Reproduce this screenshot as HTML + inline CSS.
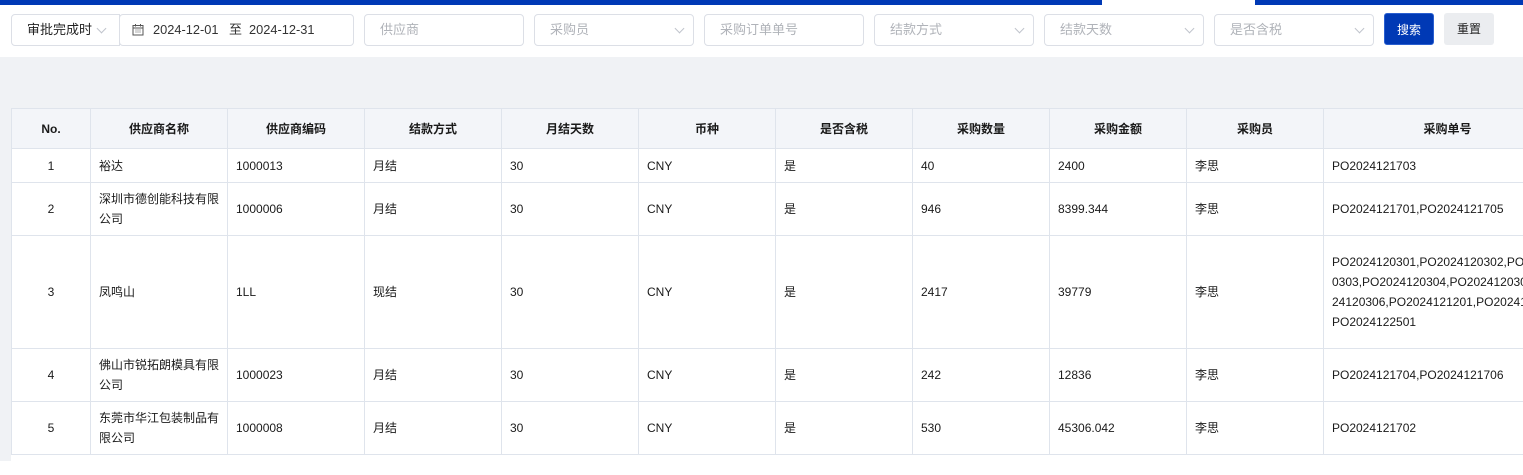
<!DOCTYPE html>
<html><head><meta charset="utf-8">
<style>
*{box-sizing:border-box;margin:0;padding:0}
html,body{width:1523px;height:461px;overflow:hidden;background:#fff;font-family:"Liberation Sans","Noto Sans CJK SC",sans-serif;font-size:12px;color:#222}
.topbar{position:absolute;left:0;top:0;width:1523px;height:5px;background:#0039b5}
.gap{position:absolute;left:1102px;top:0;width:153px;height:5px;background:#fff}
.bg{position:absolute;left:0;top:57px;width:1523px;height:404px;background:#f0f2f5}
.box{position:absolute;top:14px;height:32px;border:1px solid #dcdfe6;border-radius:4px;background:#fff;color:#b0b3b9;font-size:13px;line-height:30px;padding-left:15px}
.chev{position:absolute;right:10px;top:10px;width:7px;height:7px;border-right:1px solid #c0c4cc;border-bottom:1px solid #c0c4cc;transform:rotate(45deg)}
.btn{position:absolute;top:13px;height:32px;border-radius:3px;font-size:12px;line-height:32px;text-align:center}
table{position:absolute;left:11px;top:108px;border-collapse:collapse;table-layout:fixed;width:1560px;background:#fff}
td,th{border:1px solid #dfe4ec;padding:0 8px;vertical-align:middle;font-size:12px;line-height:20px;white-space:nowrap;overflow:hidden;color:#1a1a1a}
th{background:#f3f5f9;height:40px;font-weight:bold;color:#1a1a1a;text-align:center}
td:first-child{text-align:center}
</style></head><body>
<div class="topbar"></div><div class="gap"></div>
<div class="bg"></div>
<div class="box" style="left:11px;width:109px;color:#222;border-radius:4px 0 0 4px">审批完成时<span class="chev" style="right:14px"></span></div>
<div class="box" style="left:119px;width:235px;color:#333;padding-left:12px">
<svg width="12" height="12" viewBox="0 0 12 12" style="position:absolute;left:12px;top:9px"><rect x="1" y="1.5" width="10" height="9.5" fill="none" stroke="#555" stroke-width="1"/><line x1="1" y1="4" x2="11" y2="4" stroke="#555"/><line x1="3.5" y1="0" x2="3.5" y2="2.5" stroke="#555"/><line x1="8.5" y1="0" x2="8.5" y2="2.5" stroke="#555"/><line x1="3" y1="6" x2="9" y2="6" stroke="#999" stroke-width=".8"/><line x1="3" y1="8" x2="9" y2="8" stroke="#999" stroke-width=".8"/></svg>
<span style="position:absolute;left:33px;font-size:12.8px">2024-12-01</span>
<span style="position:absolute;left:109px;font-size:13px">至</span>
<span style="position:absolute;left:129px;font-size:12.8px">2024-12-31</span></div>
<div class="box" style="left:364px;width:160px">供应商</div>
<div class="box" style="left:534px;width:160px">采购员<span class="chev"></span></div>
<div class="box" style="left:704px;width:160px">采购订单单号</div>
<div class="box" style="left:874px;width:160px">结款方式<span class="chev"></span></div>
<div class="box" style="left:1044px;width:160px">结款天数<span class="chev"></span></div>
<div class="box" style="left:1214px;width:160px">是否含税<span class="chev"></span></div>
<div class="btn" style="left:1384px;width:50px;background:#0039b5;color:#fff;border:1px solid #2a5fd0">搜索</div>
<div class="btn" style="left:1444px;width:50px;background:#ebedf0;color:#222">重置</div>
<table>
<colgroup><col style="width:79px"><col style="width:137px"><col style="width:137px"><col style="width:137px"><col style="width:137px"><col style="width:137px"><col style="width:137px"><col style="width:137px"><col style="width:137px"><col style="width:137px"><col style="width:248px"></colgroup>
<tr><th>No.</th><th>供应商名称</th><th>供应商编码</th><th>结款方式</th><th>月结天数</th><th>币种</th><th>是否含税</th><th>采购数量</th><th>采购金额</th><th>采购员</th><th>采购单号</th></tr>
<tr style="height:34px"><td>1</td><td>裕达</td><td>1000013</td><td>月结</td><td>30</td><td>CNY</td><td>是</td><td>40</td><td>2400</td><td>李思</td><td>PO2024121703</td></tr>
<tr style="height:53px"><td>2</td><td>深圳市德创能科技有限<br>公司</td><td>1000006</td><td>月结</td><td>30</td><td>CNY</td><td>是</td><td>946</td><td>8399.344</td><td>李思</td><td>PO2024121701,PO2024121705</td></tr>
<tr style="height:113px"><td>3</td><td>凤鸣山</td><td>1LL</td><td>现结</td><td>30</td><td>CNY</td><td>是</td><td>2417</td><td>39779</td><td>李思</td><td>PO2024120301,PO2024120302,PO2024120<br>0303,PO2024120304,PO2024120305,PO20<br>24120306,PO2024121201,PO2024121202,<br>PO2024122501</td></tr>
<tr style="height:53px"><td>4</td><td>佛山市锐拓朗模具有限<br>公司</td><td>1000023</td><td>月结</td><td>30</td><td>CNY</td><td>是</td><td>242</td><td>12836</td><td>李思</td><td>PO2024121704,PO2024121706</td></tr>
<tr style="height:53px"><td>5</td><td>东莞市华江包装制品有<br>限公司</td><td>1000008</td><td>月结</td><td>30</td><td>CNY</td><td>是</td><td>530</td><td>45306.042</td><td>李思</td><td>PO2024121702</td></tr>
<tr style="height:20px"><td></td><td></td><td></td><td></td><td></td><td></td><td></td><td></td><td></td><td></td><td></td></tr>
</table>
<style>table tr:last-child td{border-left:none;border-right:none;border-bottom:none}</style>
</body></html>
